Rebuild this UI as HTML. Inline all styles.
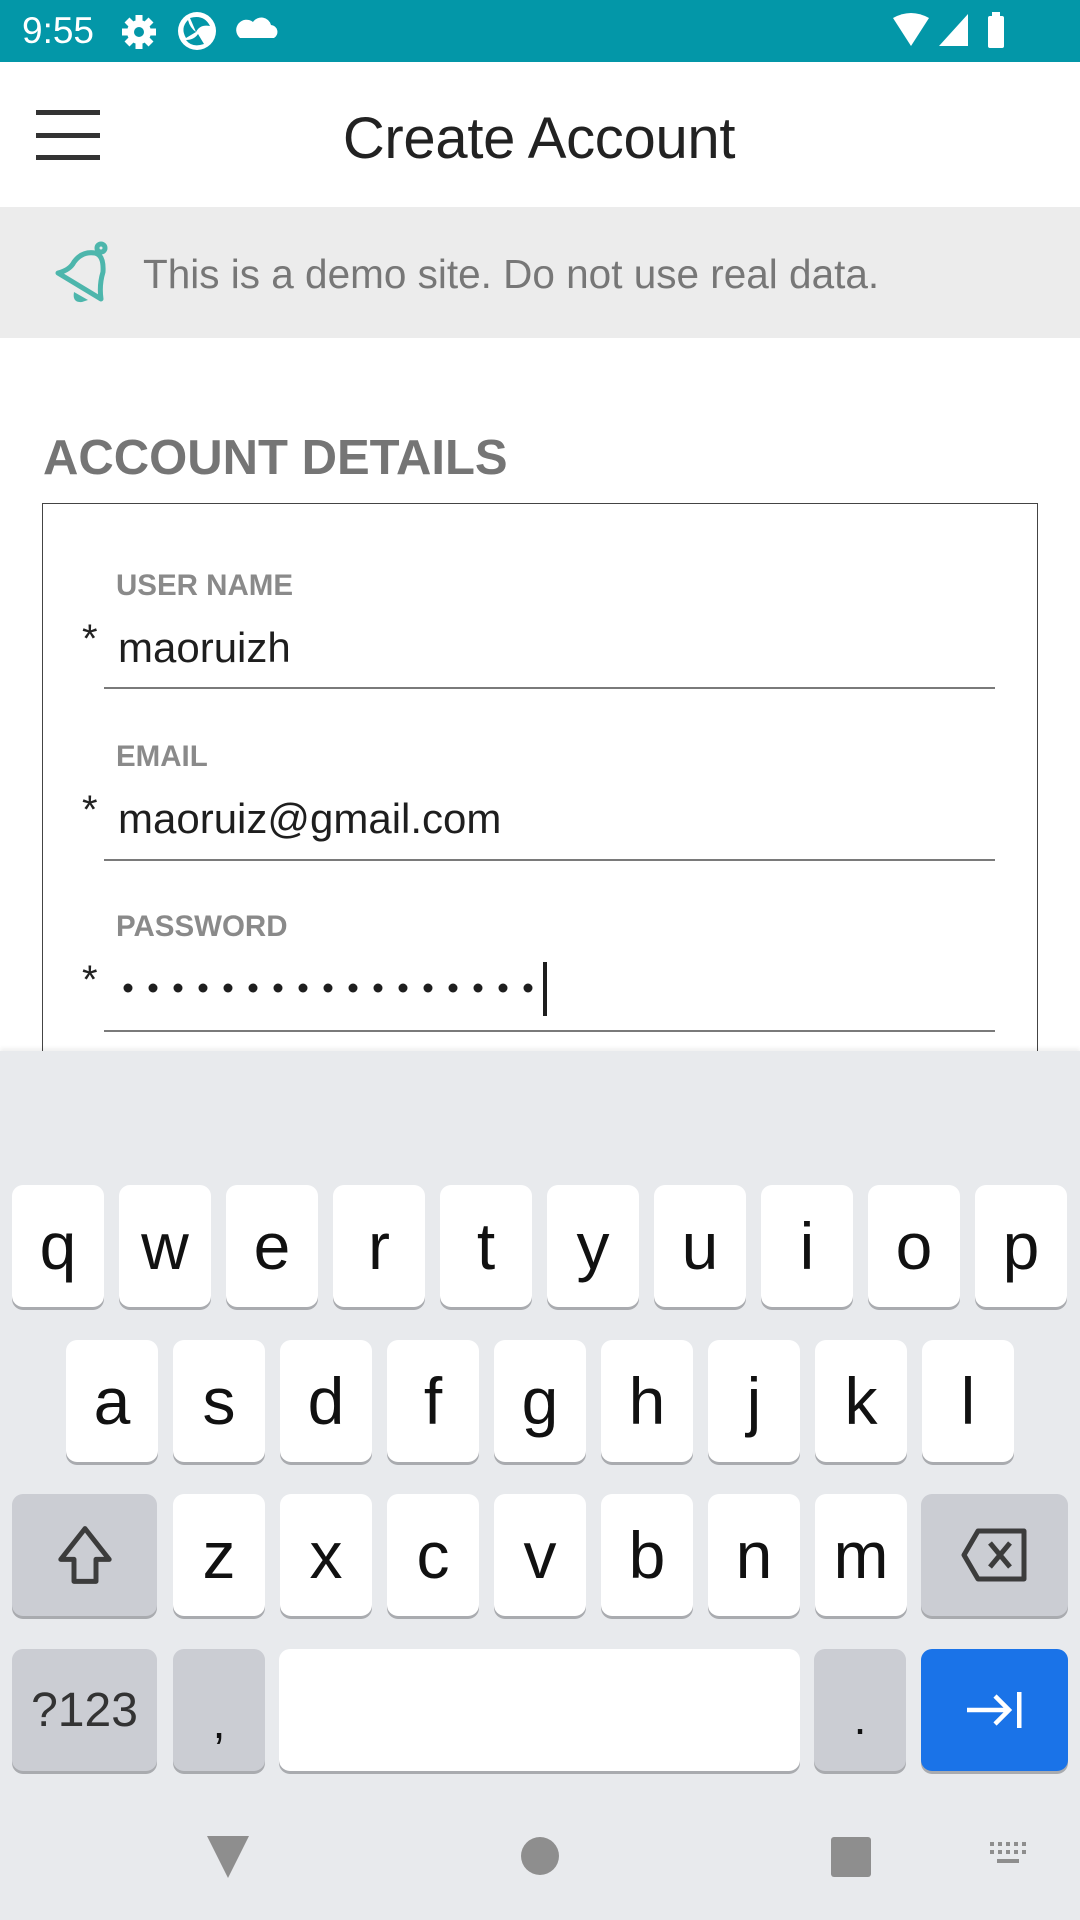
<!DOCTYPE html>
<html><head><meta charset="utf-8"><style>
*{margin:0;padding:0;box-sizing:border-box}
body{width:1080px;height:1920px;position:relative;overflow:hidden;background:#fff;font-family:"Liberation Sans",sans-serif}
.abs{position:absolute}
.sb{left:0;top:0;width:1080px;height:62px;background:#0397a8}
.key{position:absolute;background:#fff;border-radius:11px;box-shadow:0 3px 0 #a9abaf;display:flex;align-items:center;justify-content:center;font-size:66px;color:#111;height:122px;width:92px}
.g{background:#cbcdd3}
.lab{position:absolute;left:116px;font-size:29.5px;font-weight:bold;color:#8a8a8a}
.val{position:absolute;left:118px;font-size:42px;color:#1e1e1e}
.ast{position:absolute;left:82px;font-size:40px;color:#222}
.ul{position:absolute;left:104px;width:891px;height:2px;background:#7a7a7a}
</style></head><body>
<div class="abs sb"></div>
<div class="abs" style="left:22px;top:10px;font-size:37px;color:#fff">9:55</div>
<svg class="abs" style="left:0;top:0" width="1080" height="62">
<g fill="#fff">
<circle cx="139" cy="32" r="12"/>
<g stroke="#fff" stroke-width="7"><line x1="139" y1="15" x2="139" y2="49"/><line x1="122" y1="32" x2="156" y2="32"/><line x1="127" y1="20" x2="151" y2="44"/><line x1="151" y1="20" x2="127" y2="44"/></g>
<circle cx="139" cy="32" r="5" fill="#0397a8"/>
<circle cx="197" cy="31" r="19"/>
<path d="M190 18 q14 -4 20 8 q-10 -2 -14 6z M186 38 q-6 -10 2 -18 q2 8 8 12z M204 44 q-12 4 -18 -4 q8 0 12 -6z" fill="#0397a8"/>
<path d="M240 38 h34 a7 7 0 0 0 -3 -13 a10 10 0 0 0 -18 -3 a8 8 0 0 0 -13 16z"/>
<path d="M893 18 q18 -10 36 0 l-18 28z"/>
<path d="M968 14 v32 h-29z"/>
<rect x="988" y="16" width="16" height="32" rx="2"/><rect x="992" y="12" width="8" height="6"/>
</g></svg>
<!-- header -->
<div class="abs" style="left:36px;top:110px;width:64px;height:5px;background:#333"></div>
<div class="abs" style="left:36px;top:133px;width:64px;height:5px;background:#333"></div>
<div class="abs" style="left:36px;top:155px;width:64px;height:5px;background:#333"></div>
<div class="abs" style="left:0;top:105px;width:1078px;text-align:center;font-size:58px;color:#222;letter-spacing:-0.3px">Create Account</div>
<!-- banner -->
<div class="abs" style="left:0;top:207px;width:1080px;height:131px;background:#ececec"></div>
<svg class="abs" style="left:30px;top:230px" width="100" height="90" viewBox="30 230 100 90">
<g fill="none" stroke="#4db6ac" stroke-width="5" stroke-linejoin="round">
<path d="M58 273 L101 299 Q99 285 103 272 Q104 255 95 253 Q82 251 74 262 Q70 270 58 273Z"/>
<circle cx="101" cy="248" r="4"/>
</g>
<path d="M74 292 Q72 303 82 302 L88 300Z" fill="#4db6ac"/>
</svg>
<div class="abs" style="left:143px;top:251px;font-size:40.5px;color:#777">This is a demo site. Do not use real data.</div>
<!-- form -->
<div class="abs" style="left:43px;top:430px;font-size:49px;font-weight:bold;color:#757575">ACCOUNT DETAILS</div>
<div class="abs" style="left:42px;top:503px;width:996px;height:600px;border:1.5px solid #444"></div>
<div class="lab" style="top:569px">USER NAME</div>
<div class="ast" style="top:617px">*</div>
<div class="val" style="top:624px">maoruizh</div>
<div class="ul" style="top:687px"></div>
<div class="lab" style="top:740px">EMAIL</div>
<div class="ast" style="top:788px">*</div>
<div class="val" style="top:795px">maoruiz@gmail.com</div>
<div class="ul" style="top:859px"></div>
<div class="lab" style="top:910px">PASSWORD</div>
<div class="ast" style="top:958px">*</div>
<svg class="abs" style="left:0;top:950px" width="600" height="80"><g fill="#1e1e1e">
<circle cx="128" cy="38" r="4.5"/><circle cx="153" cy="38" r="4.5"/><circle cx="178" cy="38" r="4.5"/><circle cx="203" cy="38" r="4.5"/><circle cx="228" cy="38" r="4.5"/><circle cx="253" cy="38" r="4.5"/><circle cx="278" cy="38" r="4.5"/><circle cx="303" cy="38" r="4.5"/><circle cx="328" cy="38" r="4.5"/><circle cx="353" cy="38" r="4.5"/><circle cx="378" cy="38" r="4.5"/><circle cx="403" cy="38" r="4.5"/><circle cx="428" cy="38" r="4.5"/><circle cx="453" cy="38" r="4.5"/><circle cx="478" cy="38" r="4.5"/><circle cx="503" cy="38" r="4.5"/><circle cx="528" cy="38" r="4.5"/>
<rect x="543" y="12" width="4" height="54"/></g></svg>
<div class="ul" style="top:1030px"></div>
<!-- keyboard -->
<div class="abs" style="left:0;top:1051px;width:1080px;height:869px;background:#e8eaed;box-shadow:0 -3px 4px rgba(0,0,0,0.06)"></div>
<div class="key" style="left:12px;top:1185px">q</div>
<div class="key" style="left:119px;top:1185px">w</div>
<div class="key" style="left:226px;top:1185px">e</div>
<div class="key" style="left:333px;top:1185px">r</div>
<div class="key" style="left:440px;top:1185px">t</div>
<div class="key" style="left:547px;top:1185px">y</div>
<div class="key" style="left:654px;top:1185px">u</div>
<div class="key" style="left:761px;top:1185px">i</div>
<div class="key" style="left:868px;top:1185px">o</div>
<div class="key" style="left:975px;top:1185px">p</div>
<div class="key" style="left:66px;top:1340px">a</div>
<div class="key" style="left:173px;top:1340px">s</div>
<div class="key" style="left:280px;top:1340px">d</div>
<div class="key" style="left:387px;top:1340px">f</div>
<div class="key" style="left:494px;top:1340px">g</div>
<div class="key" style="left:601px;top:1340px">h</div>
<div class="key" style="left:708px;top:1340px">j</div>
<div class="key" style="left:815px;top:1340px">k</div>
<div class="key" style="left:922px;top:1340px">l</div>
<div class="key g" style="left:12px;top:1494px;width:145px"><svg width="66" height="66" viewBox="0 0 60 60"><path d="M30 6 L52 34 H40 V54 H20 V34 H8Z" fill="none" stroke="#3c3c3c" stroke-width="4.5" stroke-linejoin="round"/></svg></div>
<div class="key" style="left:173px;top:1494px">z</div>
<div class="key" style="left:280px;top:1494px">x</div>
<div class="key" style="left:387px;top:1494px">c</div>
<div class="key" style="left:494px;top:1494px">v</div>
<div class="key" style="left:601px;top:1494px">b</div>
<div class="key" style="left:708px;top:1494px">n</div>
<div class="key" style="left:815px;top:1494px">m</div>
<div class="key g" style="left:921px;top:1494px;width:147px"><svg width="70" height="56" viewBox="0 0 70 56"><path d="M18 4 H64 V52 H18 L4 28Z" fill="none" stroke="#3c3c3c" stroke-width="5" stroke-linejoin="round"/><path d="M30 16 L50 40 M50 16 L30 40" stroke="#3c3c3c" stroke-width="5"/></svg></div>
<div class="key g" style="left:12px;top:1649px;width:145px;font-size:48px;color:#333">?123</div>
<div class="key g" style="left:173px;top:1649px;font-size:46px;padding-top:24px">,</div>
<div class="key" style="left:279px;top:1649px;width:521px"></div>
<div class="key g" style="left:814px;top:1649px;font-size:46px;padding-top:16px">.</div>
<div class="key" style="left:921px;top:1649px;width:147px;background:#1a73e8"><svg width="60" height="40" viewBox="0 0 60 40"><path d="M2 20 H44 M30 6 L44 20 L30 34" fill="none" stroke="#fff" stroke-width="4.5"/><rect x="52" y="2" width="4.5" height="36" fill="#fff"/></svg></div>
<!-- nav -->
<svg class="abs" style="left:0;top:1820px" width="1080" height="80"><g fill="#8e8e8e">
<path d="M207 16 H249 L228 58Z"/>
<circle cx="540" cy="36" r="19"/>
<rect x="831" y="17" width="40" height="40" rx="3"/>
<g><rect x="990" y="22" width="4" height="4"/><rect x="998" y="22" width="4" height="4"/><rect x="1006" y="22" width="4" height="4"/><rect x="1014" y="22" width="4" height="4"/><rect x="1022" y="22" width="4" height="4"/>
<rect x="990" y="30" width="4" height="4"/><rect x="998" y="30" width="4" height="4"/><rect x="1006" y="30" width="4" height="4"/><rect x="1014" y="30" width="4" height="4"/><rect x="1022" y="30" width="4" height="4"/>
<rect x="997" y="39" width="22" height="4"/></g>
</g></svg>
</body></html>
